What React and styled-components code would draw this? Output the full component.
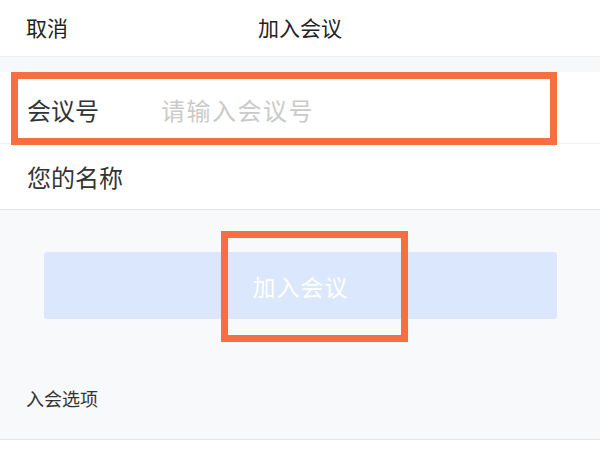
import React from "react";
import styled, { createGlobalStyle } from "styled-components";

const Global = createGlobalStyle`
  html, body { margin: 0; padding: 0; background: #ffffff; }
  body { font-family: "Noto Sans CJK SC", "Noto Sans", sans-serif; }
  * { box-sizing: border-box; }
`;

const Page = styled.div`
  width: 600px;
  height: 450px;
  overflow: hidden;
  background: #ffffff;
  display: flex;
  flex-direction: column;
`;

const Header = styled.div`
  height: 57px;
  display: grid;
  grid-template-columns: 1fr auto 1fr;
  align-items: center;
  padding: 0 26px;
  border-bottom: 1px solid #f0f0f2;
  font-size: 21px;
  color: #222;
`;

const Cancel = styled.span`
  justify-self: start;
  margin-top: -2px;
`;

const Title = styled.span`
  margin-top: -2px;
`;

const Gap = styled.div`
  height: 15px;
  background: #f7f8fa;
`;

const Form = styled.div`
  background: #ffffff;
  display: flex;
  flex-direction: column;
`;

const Row = styled.label`
  position: relative;
  height: ${(p) => p.$h}px;
  padding: ${(p) => p.$pt || 0}px 0 0 27px;
  display: flex;
  align-items: center;
  border-bottom: 1px solid ${(p) => p.$line};
`;

const Label = styled.span`
  width: 134px;
  flex: none;
  font-size: 24px;
  color: #333;
`;

const Input = styled.input`
  flex: 1;
  border: none;
  outline: none;
  background: transparent;
  font-family: inherit;
  font-size: 24px;
  letter-spacing: 1.5px;
  color: #333;
  padding: 0;
  &::placeholder { color: #cacaca; }
`;

const Highlight = styled.div`
  position: absolute;
  left: ${(p) => p.$x}px;
  top: ${(p) => p.$y}px;
  width: ${(p) => p.$w}px;
  height: ${(p) => p.$hh}px;
  border: 7px solid #f76f40;
  pointer-events: none;
`;

const Lower = styled.div`
  flex: 1;
  display: flex;
  flex-direction: column;
  background: #f8f9fb;
`;

const ButtonArea = styled.div`
  position: relative;
  padding: 42px 43px 0 44px;
`;

const JoinButton = styled.button`
  width: 100%;
  height: 67px;
  border: none;
  border-radius: 3px;
  background: #dbe7fc;
  color: #ffffff;
  font-family: inherit;
  font-size: 23px;
  letter-spacing: 1px;
  display: flex;
  align-items: center;
  justify-content: center;
  padding: 0;
`;

const OptionsHeader = styled.div`
  margin-top: 58px;
  height: 63px;
  padding: 0 26px 21px;
  display: flex;
  align-items: center;
  font-size: 18px;
  color: #333;
  border-bottom: 1px solid #e6e7ea;
`;

const Bottom = styled.div`
  flex: 1;
  background: #ffffff;
`;

export default function App() {
  return (
    <Page>
      <Global />
      <Header>
        <Cancel>取消</Cancel>
        <Title>加入会议</Title>
        <span />
      </Header>
      <Gap />
      <Form>
        <Row $h={72} $pt={4} $line="#f1f1f3">
          <Label>会议号</Label>
          <Input placeholder="请输入会议号" />
          <Highlight $x={11} $y={0} $w={546} $hh={73} />
        </Row>
        <Row $h={66} $line="#e4e5e8">
          <Label>您的名称</Label>
          <Input />
        </Row>
      </Form>
      <Lower>
        <ButtonArea>
          <JoinButton>加入会议</JoinButton>
          <Highlight $x={221} $y={21} $w={187} $hh={111} />
        </ButtonArea>
        <OptionsHeader>入会选项</OptionsHeader>
        <Bottom />
      </Lower>
    </Page>
  );
}
